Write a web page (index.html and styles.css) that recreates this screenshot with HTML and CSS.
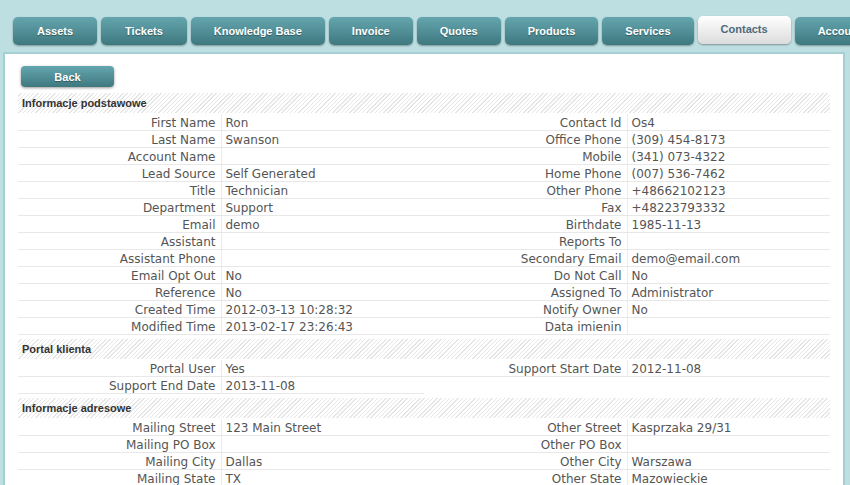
FILE: index.html
```html
<!DOCTYPE html>
<html lang="en">
<head>
    <meta charset="UTF-8">
    <meta name="viewport" content="width=device-width, initial-scale=1.0">
    <title>Contacts - Ron Swanson</title>
    <link rel="stylesheet" href="styles.css">
</head>
<body>
    <nav class="tabs">
        <a class="tab" href="#">Assets</a>
        <a class="tab" href="#">Tickets</a>
        <a class="tab" href="#">Knowledge Base</a>
        <a class="tab" href="#">Invoice</a>
        <a class="tab" href="#">Quotes</a>
        <a class="tab" href="#">Products</a>
        <a class="tab" href="#">Services</a>
        <a class="tab active" href="#">Contacts</a>
        <a class="tab" href="#">Accounts</a>
    </nav>

    <main class="panel">
        <button class="back-btn">Back</button>

        <div class="block-title">Informacje podstawowe</div>
        <table class="detail">
            <tr><td class="lbl">First Name</td><td class="val">Ron</td><td class="lbl">Contact Id</td><td class="val">Os4</td></tr>
            <tr><td class="lbl">Last Name</td><td class="val">Swanson</td><td class="lbl">Office Phone</td><td class="val">(309) 454-8173</td></tr>
            <tr><td class="lbl">Account Name</td><td class="val"></td><td class="lbl">Mobile</td><td class="val">(341) 073-4322</td></tr>
            <tr><td class="lbl">Lead Source</td><td class="val">Self Generated</td><td class="lbl">Home Phone</td><td class="val">(007) 536-7462</td></tr>
            <tr><td class="lbl">Title</td><td class="val">Technician</td><td class="lbl">Other Phone</td><td class="val">+48662102123</td></tr>
            <tr><td class="lbl">Department</td><td class="val">Support</td><td class="lbl">Fax</td><td class="val">+48223793332</td></tr>
            <tr><td class="lbl">Email</td><td class="val">demo</td><td class="lbl">Birthdate</td><td class="val">1985-11-13</td></tr>
            <tr><td class="lbl">Assistant</td><td class="val"></td><td class="lbl">Reports To</td><td class="val"></td></tr>
            <tr><td class="lbl">Assistant Phone</td><td class="val"></td><td class="lbl">Secondary Email</td><td class="val">demo@email.com</td></tr>
            <tr><td class="lbl">Email Opt Out</td><td class="val">No</td><td class="lbl">Do Not Call</td><td class="val">No</td></tr>
            <tr><td class="lbl">Reference</td><td class="val">No</td><td class="lbl">Assigned To</td><td class="val">Administrator</td></tr>
            <tr><td class="lbl">Created Time</td><td class="val">2012-03-13 10:28:32</td><td class="lbl">Notify Owner</td><td class="val">No</td></tr>
            <tr><td class="lbl">Modified Time</td><td class="val">2013-02-17 23:26:43</td><td class="lbl">Data imienin</td><td class="val"></td></tr>
        </table>

        <div class="block-title">Portal klienta</div>
        <table class="detail">
            <tr><td class="lbl">Portal User</td><td class="val">Yes</td><td class="lbl">Support Start Date</td><td class="val">2012-11-08</td></tr>
            <tr><td class="lbl">Support End Date</td><td class="val">2013-11-08</td><td class="blank"></td><td class="blank"></td></tr>
        </table>

        <div class="block-title">Informacje adresowe</div>
        <table class="detail">
            <tr><td class="lbl">Mailing Street</td><td class="val">123 Main Street</td><td class="lbl">Other Street</td><td class="val">Kasprzaka 29/31</td></tr>
            <tr><td class="lbl">Mailing PO Box</td><td class="val"></td><td class="lbl">Other PO Box</td><td class="val"></td></tr>
            <tr><td class="lbl">Mailing City</td><td class="val">Dallas</td><td class="lbl">Other City</td><td class="val">Warszawa</td></tr>
            <tr><td class="lbl">Mailing State</td><td class="val">TX</td><td class="lbl">Other State</td><td class="val">Mazowieckie</td></tr>
        </table>
    </main>
</body>
</html>
```

FILE: styles.css
```css
html, body {
    overflow: hidden;
}
body {
    margin: 0;
    padding: 0;
    background-color: #bddfe2;
    font-family: "DejaVu Sans", Verdana, sans-serif;
}
.tabs {
    display: flex;
    gap: 4px;
    padding: 17px 0 0 13px;
    white-space: nowrap;
}
.tab {
    flex: none;
    height: 28px;
    line-height: 28px;
    padding: 0 23px;
    border-radius: 5px;
    background: linear-gradient(#64a6ae, #3f787f);
    color: white;
    font-family: "Liberation Sans", Arial, sans-serif;
    font-size: 11px;
    font-weight: bold;
    text-decoration: none;
    text-shadow: 0 1px 1px rgba(0, 0, 0, 0.35);
    box-shadow: 0 1px 2px rgba(0, 0, 0, 0.35);
}
.tab:first-child,
.tab:nth-child(2) {
    padding: 0 24px;
}
.tab.active {
    margin-top: -1px;
    line-height: 27px;
    background: linear-gradient(#ffffff, #dcdcdc);
    color: #4d6b7c;
    text-shadow: none;
}
.panel {
    margin: 7px 5px 0 3px;
    padding: 12px 13px 0 13px;
    background: white;
    border: 2px solid #a4d0d3;
    border-bottom: none;
    height: 440px;
}
.back-btn {
    display: block;
    width: 93px;
    height: 21px;
    margin: 0 0 6px 3px;
    padding: 0;
    border: none;
    border-radius: 4px;
    background: linear-gradient(#64a6ae, #3f787f);
    color: white;
    font-family: "Liberation Sans", Arial, sans-serif;
    font-size: 11px;
    font-weight: bold;
    text-shadow: 0 1px 1px rgba(0, 0, 0, 0.35);
    box-shadow: 0 1px 3px rgba(0, 0, 0, 0.4);
    cursor: pointer;
}
.block-title {
    height: 20px;
    line-height: 20px;
    margin: 4px 0 1px 0;
    padding-left: 4px;
    color: #333;
    font-family: "Liberation Sans", Arial, sans-serif;
    font-size: 11px;
    font-weight: bold;
    background: repeating-linear-gradient(135deg, #ffffff 0, #ffffff 2px, #e6e6e6 2px, #e6e6e6 3px);
}
.detail {
    width: 100%;
    border-collapse: collapse;
    table-layout: fixed;
    font-size: 12px;
    color: #555;
}
.detail td {
    height: 14px;
    padding: 2px 0 0 0;
    line-height: 14px;
    border-bottom: 1px solid #e8e8e8;
    white-space: nowrap;
    overflow: hidden;
}
.detail td.lbl {
    text-align: right;
    padding-right: 5px;
}
.detail td.val {
    padding-left: 4px;
    border-left: 1px solid #ececec;
}
.detail td.blank {
    border-bottom: none;
}
```
